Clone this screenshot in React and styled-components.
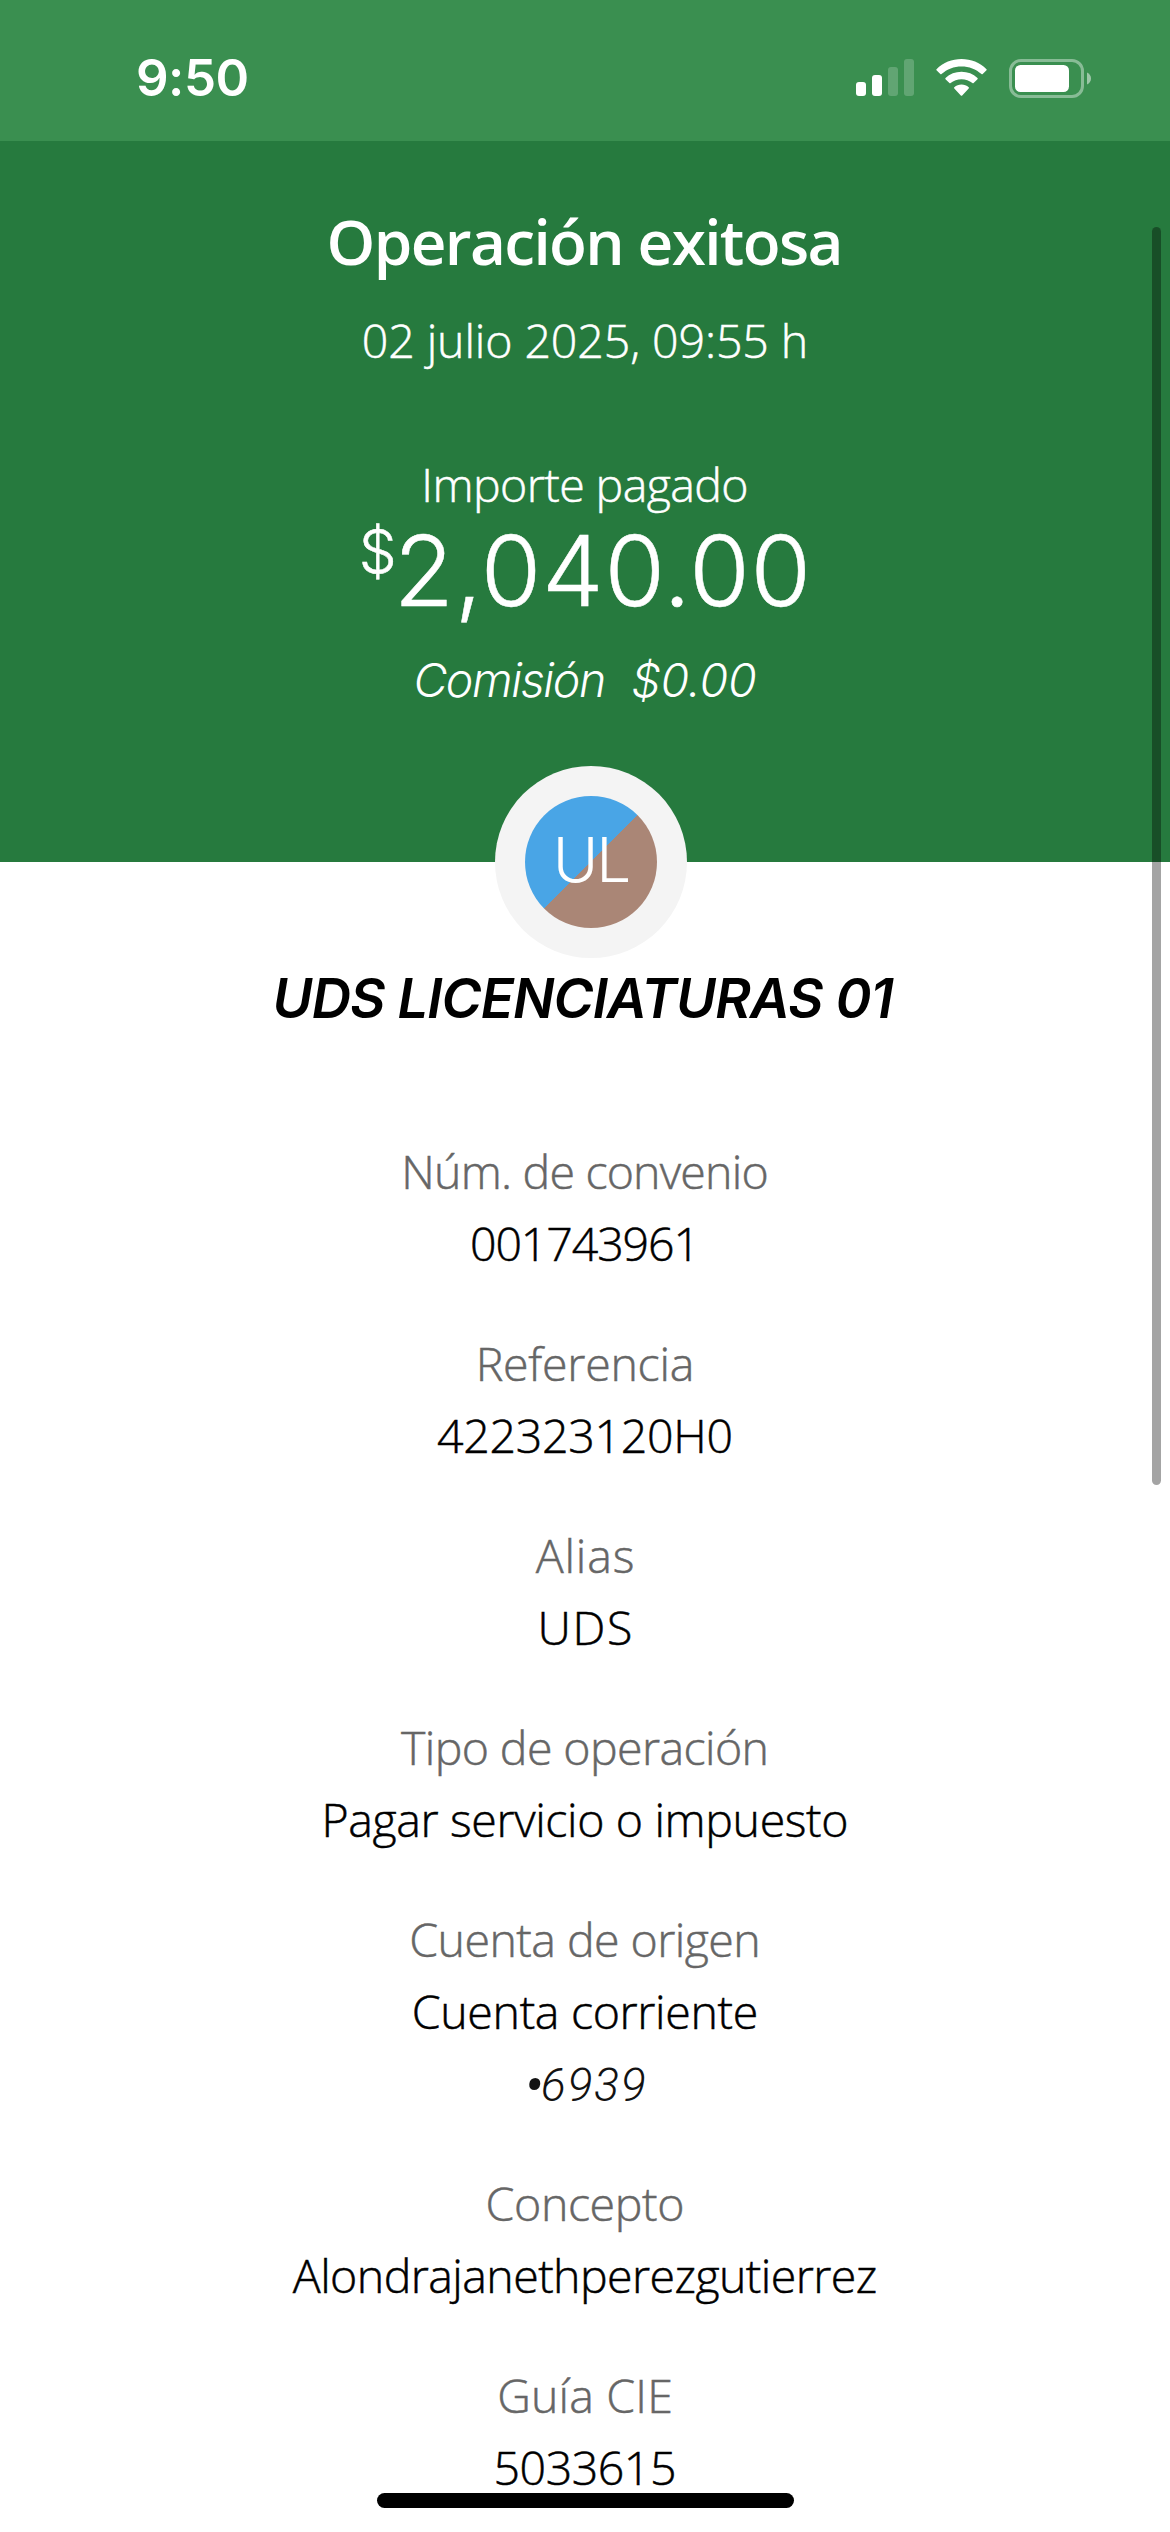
import React from 'react';
import styled, { createGlobalStyle } from 'styled-components';

const GlobalStyle = createGlobalStyle`
    *{
        box-sizing: border-box;
    }
    body{
        margin: 0;
        background-color: #fff;
        font-family: "Open Sans", "Noto Sans", sans-serif;
        font-weight: 300;
    }
`

const Screen = styled.div`
    position: relative;
    width: 1170px;
    height: 2532px;
    overflow: hidden;
    background-color: #fff;
`

const StatusBar = styled.div`
    display: flex;
    align-items: center;
    justify-content: space-between;
    height: 141px;
    padding: 15px 79px 0 136px;
    background-color: #3a8f50;
`

const Clock = styled.div`
    font-family: Inter, sans-serif;
    font-size: 51px;
    font-weight: 600;
    line-height: 60px;
    letter-spacing: -0.5px;
    color: #fff;
`

const StatusIcons = styled.div`
    display: flex;
    align-items: center;
    gap: 22px;
    svg{
        display: block;
    }
`

const Header = styled.div`
    display: flex;
    flex-direction: column;
    align-items: center;
    height: 721px;
    padding-top: 60px;
    background-color: #267a3e;
    color: #fff;
`

// 글자 간격은 줄마다 다름, 마지막 글자 뒤 간격은 margin으로 상쇄
const Line = styled.div`
    font-size: 46.5px;
    line-height: 72px;
    white-space: nowrap;
    letter-spacing: ${({ $gap = 0 }) => $gap}px;
    margin-right: ${({ $gap = 0 }) => -$gap}px;
    -webkit-text-stroke: 0.5px currentColor;
`

const Title = styled(Line)`
    font-size: 62px;
    font-weight: 600;
    line-height: 80px;
    margin-bottom: 23px;
    -webkit-text-stroke: 0;
`

const DateText = styled(Line)`
    margin-bottom: 72px;
`

const Amount = styled(Line)`
    margin-top: 3px;
    margin-bottom: 25px;
    font-family: Inter, sans-serif;
    font-size: 98px;
    line-height: 96px;
`

const Currency = styled.span`
    font-size: 60px;
    line-height: 0;
    letter-spacing: -3px;
    vertical-align: 33px;
`

const Fee = styled.div`
    display: flex;
    gap: 25px;
    font-family: Inter, sans-serif;
    font-style: italic;
`

const FeeText = styled(Line)`
    -webkit-text-stroke: 0;
`

const Payee = styled.div`
    display: flex;
    flex-direction: column;
    align-items: center;
    margin-top: -96px;
`

const AvatarRing = styled.div`
    display: flex;
    align-items: center;
    justify-content: center;
    width: 192px;
    height: 192px;
    margin-left: 12px;
    border-radius: 50%;
    background-color: #f4f4f4;
`

const Avatar = styled.div`
    display: flex;
    align-items: center;
    justify-content: center;
    width: 132px;
    height: 132px;
    padding-bottom: 5px;
    border-radius: 50%;
    background: linear-gradient(135deg, #49a5e6 50%, #aa8676 50%);
    color: #fff;
    font-family: Inter, sans-serif;
    font-size: 62px;
    letter-spacing: -2px;
`

const PayeeName = styled(Line)`
    margin-top: 4px;
    padding-right: 4px;
    font-family: Inter, sans-serif;
    font-size: 54.5px;
    font-weight: 600;
    font-style: italic;
    color: #000;
    -webkit-text-stroke: 0;
`

const Details = styled.div`
    display: flex;
    flex-direction: column;
    gap: 48px;
    padding-top: 101px;
`

const Detail = styled.div`
    display: flex;
    flex-direction: column;
    align-items: center;
`

const Label = styled(Line)`
    color: #666;
`

const Value = styled(Line)`
    color: #000;
`

const SubValue = styled(Line)`
    margin-bottom: -4px;
    font-family: Roboto, sans-serif;
    font-style: italic;
    line-height: 76px;
    color: #121212;
    -webkit-text-stroke: 0;
`

const Bullet = styled.span`
    font-size: 62px;
    line-height: 0;
    letter-spacing: -3px;
    vertical-align: -6px;
`

const ScrollBar = styled.div`
    position: absolute;
    top: 227px;
    right: 9px;
    width: 9px;
    height: 1258px;
    border-radius: 5px;
    background-color: rgba(0, 0, 0, 0.355);
`

const HomeIndicator = styled.div`
    position: absolute;
    left: 377px;
    bottom: 24px;
    width: 417px;
    height: 15px;
    border-radius: 8px;
    background-color: #000;
`

const details = [
    { label: 'Núm. de convenio', labelGap: -0.81, value: '001743961', valueGap: -1.1 },
    { label: 'Referencia', labelGap: -0.27, value: '422323120H0', valueGap: -0.28 },
    { label: 'Alias', labelGap: 0.85, value: 'UDS', valueGap: 1.6 },
    { label: 'Tipo de operación', labelGap: -0.61, value: 'Pagar servicio o impuesto', valueGap: -0.37 },
    { label: 'Cuenta de origen', labelGap: -0.56, value: 'Cuenta corriente', valueGap: -0.35, sub: '6939' },
    { label: 'Concepto', labelGap: -0.41, value: 'Alondrajanethperezgutierrez', valueGap: -0.58 },
    { label: 'Guía CIE', labelGap: 0.16, value: '5033615', valueGap: -0.47 },
]

function SignalIcon() {
    return (
        <svg width="58" height="38" viewBox="0 0 58 38" fill="#fff">
            <rect x="0" y="23" width="10" height="14" rx="3" />
            <rect x="16" y="16" width="10" height="21" rx="3" />
            <rect x="32" y="8" width="10" height="29" rx="3" opacity="0.2" />
            <rect x="48" y="0" width="10" height="37" rx="3" opacity="0.2" />
        </svg>
    )
}

function WifiIcon() {
    return (
        <svg width="51" height="38" viewBox="0 0 51 38" fill="#fff">
            <path d="M25.5 0C35 0 43.8 3.6 50.5 10.2Q51 10.8 50.5 11.3L46.7 15.1Q46.1 15.6 45.5 15.1C40 10 33 7.4 25.5 7.4S11 10 5.5 15.1Q4.9 15.6 4.3 15.1L0.5 11.3Q0 10.8 0.5 10.2C7.2 3.6 16 0 25.5 0Z" />
            <path d="M25.5 12.8C31.6 12.8 37.2 15 41.5 19.1Q42 19.7 41.5 20.2L37.6 24Q37 24.5 36.4 24C33.4 21.5 29.6 20.2 25.5 20.2S17.6 21.5 14.6 24Q14 24.5 13.4 24L9.5 20.2Q9 19.7 9.5 19.1C13.8 15 19.4 12.8 25.5 12.8Z" />
            <path d="M25.5 25.6C28.2 25.6 30.7 26.5 32.7 28.2Q33.3 28.8 32.7 29.4L26.2 36.4Q25.5 37.2 24.8 36.4L18.3 29.4Q17.7 28.8 18.3 28.2C20.3 26.5 22.8 25.6 25.5 25.6Z" />
        </svg>
    )
}

function BatteryIcon() {
    return (
        <svg width="82" height="39" viewBox="0 0 82 39">
            <rect x="1.5" y="1.5" width="72" height="36" rx="10.5" fill="none" stroke="#fff" strokeWidth="3" opacity="0.4" />
            <rect x="6" y="6" width="54" height="27" rx="5.5" fill="#fff" />
            <path d="M78 13.5C80.5 14.6 82 16.8 82 19.5S80.5 24.4 78 25.5Z" fill="#fff" opacity="0.5" />
        </svg>
    )
}

function App() {
    return (
        <>
            <GlobalStyle />
            <Screen>
                <StatusBar>
                    <Clock>9:50</Clock>
                    <StatusIcons>
                        <SignalIcon />
                        <WifiIcon />
                        <BatteryIcon />
                    </StatusIcons>
                </StatusBar>

                <Header>
                    <Title $gap={-1.62}>Operación exitosa</Title>
                    <DateText $gap={-0.1}>02 julio 2025, 09:55 h</DateText>
                    <Line $gap={-0.6}>Importe pagado</Line>
                    <Amount $gap={0.8}><Currency>$</Currency>2,040.00</Amount>
                    <Fee>
                        <FeeText $gap={-1.4}>Comisión</FeeText>
                        <FeeText $gap={-0.2}>$0.00</FeeText>
                    </Fee>
                </Header>

                <Payee>
                    <AvatarRing>
                        <Avatar>UL</Avatar>
                    </AvatarRing>
                    <PayeeName $gap={-0.9}>UDS LICENCIATURAS 01</PayeeName>
                </Payee>

                <Details>
                    {details.map((item) => (
                        <Detail key={item.label}>
                            <Label $gap={item.labelGap}>{item.label}</Label>
                            <Value $gap={item.valueGap}>{item.value}</Value>
                            {item.sub && <SubValue $gap={1.6}><Bullet>•</Bullet>{item.sub}</SubValue>}
                        </Detail>
                    ))}
                </Details>

                <ScrollBar />
                <HomeIndicator />
            </Screen>
        </>
    )
}

export default App
